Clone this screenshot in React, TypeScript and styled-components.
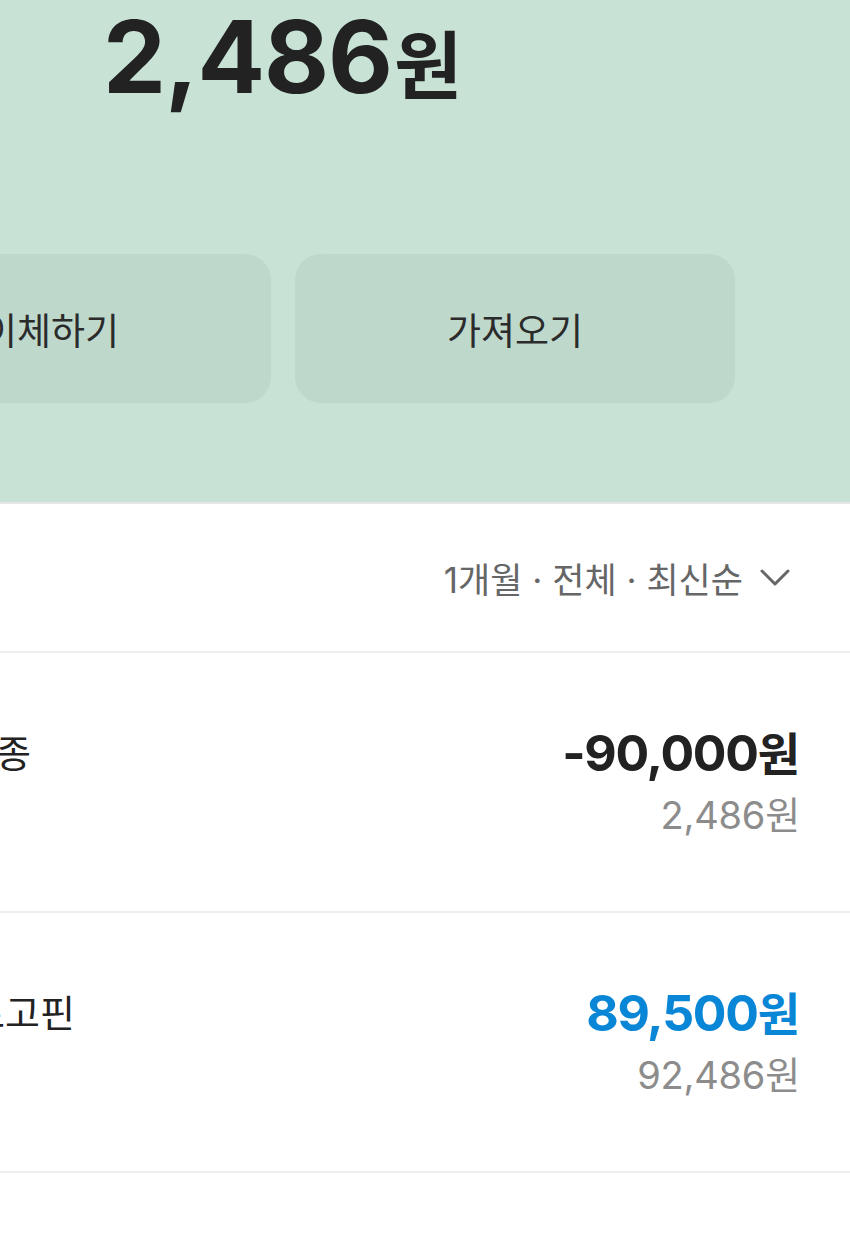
import React from "react";
import styled, { createGlobalStyle } from "styled-components";

const GlobalStyle = createGlobalStyle`
  html, body {
    margin: 0;
    padding: 0;
    background: #ffffff;
    overflow-x: hidden;
  }
  body {
    font-family: Inter, "Noto Sans CJK KR", sans-serif;
    -webkit-font-smoothing: antialiased;
  }
`;

const Page = styled.div`
  width: 850px;
  overflow: hidden;
  background: #ffffff;
  min-height: 1238px;
`;

const Header = styled.section`
  background: #c8e3d6;
  padding: 2px 0 99px 0;
  border-bottom: 2px solid #e4e7e5;
`;

const Balance = styled.div`
  padding-left: 103px;
  font-family: Inter, "Noto Sans CJK KR", sans-serif;
  font-weight: 700;
  font-size: 100px;
  line-height: 110px;
  color: #222222;
  letter-spacing: -1px;
  white-space: nowrap;
`;

const Unit = styled.span<{ $size: number; $gap: number }>`
  font-family: "Noto Sans CJK KR", sans-serif;
  font-size: ${(p) => p.$size}px;
  font-weight: 700;
  margin-left: ${(p) => p.$gap}px;
  letter-spacing: 0;
`;

const ButtonRow = styled.div`
  display: flex;
  justify-content: flex-end;
  gap: 24px;
  padding-right: 115px;
  margin-top: 138px;
`;

const ActionButton = styled.button`
  flex: 0 0 440px;
  height: 149px;
  border: none;
  border-radius: 26px;
  background: #bed9cc;
  color: #2b2b2b;
  font-family: "Noto Sans CJK KR", sans-serif;
  font-size: 37px;
  font-weight: 400;
  cursor: pointer;
`;

const FilterBar = styled.div`
  display: flex;
  justify-content: flex-end;
  align-items: center;
  gap: 17px;
  height: 147px;
  padding-right: 60px;
  border-bottom: 2px solid #eeeeee;
`;

const FilterText = styled.span`
  font-family: Inter, "Noto Sans CJK KR", sans-serif;
  font-size: 35px;
  color: #666666;
  white-space: nowrap;
`;

const Row = styled.div`
  display: flex;
  justify-content: space-between;
  align-items: flex-start;
  height: 192px;
  padding: 66px 50px 0 0;
  border-bottom: 2px solid #efefef;
`;

const Title = styled.div<{ $offset: number }>`
  margin-left: ${(p) => p.$offset}px;
  font-family: "Noto Sans CJK KR", sans-serif;
  font-size: 38px;
  line-height: 64px;
  color: #222222;
  white-space: nowrap;
`;

const Amounts = styled.div`
  display: flex;
  flex-direction: column;
  align-items: flex-end;
`;

const MainAmount = styled.div<{ $tone: "dark" | "blue" }>`
  font-family: Inter, "Noto Sans CJK KR", sans-serif;
  font-weight: 700;
  font-size: 50px;
  line-height: 64px;
  letter-spacing: -1.3px;
  color: ${(p) => (p.$tone === "blue" ? "#0a86d6" : "#222222")};
  white-space: nowrap;
`;

const SubAmount = styled.div`
  font-family: Inter, "Noto Sans CJK KR", sans-serif;
  font-size: 38px;
  line-height: 60px;
  letter-spacing: -0.2px;
  color: #8c8c8c;
  white-space: nowrap;
`;

const Chevron = () => (
  <svg width="30" height="18" viewBox="0 0 30 18" fill="none">
    <path
      d="M2 2 L15 15 L28 2"
      stroke="#666666"
      strokeWidth="3"
      strokeLinecap="round"
      strokeLinejoin="round"
    />
  </svg>
);

const rows = [
  { title: "김민종", offset: -74, amount: "-90,000", tone: "dark" as const, balance: "2,486원" },
  { title: "로고핀", offset: -30, amount: "89,500", tone: "blue" as const, balance: "92,486원" },
];

export default function App() {
  return (
    <Page>
      <GlobalStyle />
      <Header>
        <Balance>
          2,486<Unit $size={74} $gap={2}>원</Unit>
        </Balance>
        <ButtonRow>
          <ActionButton>이체하기</ActionButton>
          <ActionButton>가져오기</ActionButton>
        </ButtonRow>
      </Header>
      <FilterBar>
        <FilterText>1개월 · 전체 · 최신순</FilterText>
        <Chevron />
      </FilterBar>
      {rows.map((r) => (
        <Row key={r.title}>
          <Title $offset={r.offset}>{r.title}</Title>
          <Amounts>
            <MainAmount $tone={r.tone}>
              {r.amount}
              <Unit $size={46} $gap={0}>원</Unit>
            </MainAmount>
            <SubAmount>{r.balance}</SubAmount>
          </Amounts>
        </Row>
      ))}
    </Page>
  );
}
